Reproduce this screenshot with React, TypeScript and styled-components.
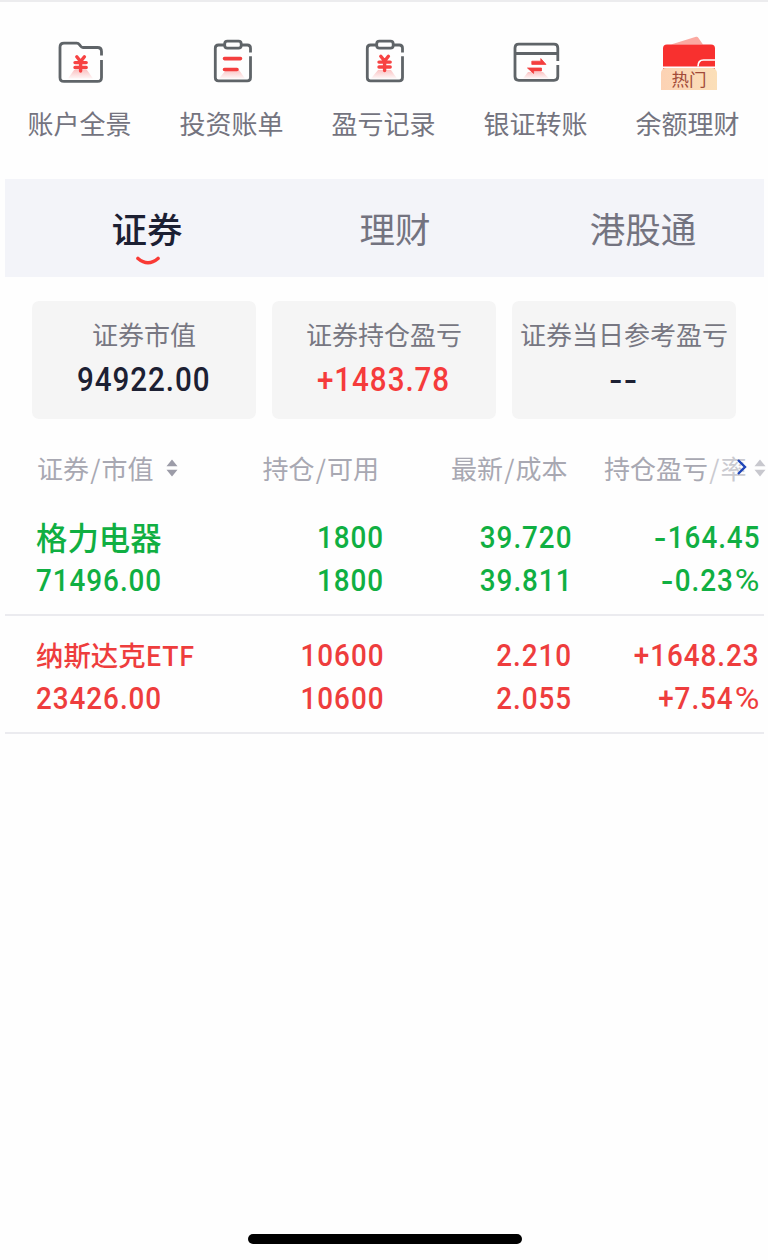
import React from "react";
import styled, { createGlobalStyle } from "styled-components";

const Global = createGlobalStyle`
  * { box-sizing: border-box; }
  body { margin: 0; background: #fefefe; font-family: "Noto Sans CJK SC", "Noto Sans", sans-serif; }
`;

const GREEN = "#10af42";
const RED = "#ee3d3d";
const INK = "#1c2033";
const STROKE = "#5f6468";

const Page = styled.main`
  display: flex;
  flex-direction: column;
  width: 768px;
  height: 1260px;
  overflow: hidden;
  background: #fefefe;
  border-top: 2px solid #ececee;
`;

const Shortcuts = styled.nav`
  display: grid;
  grid-template-columns: repeat(5, 152px);
  padding: 34px 4px 0;
  height: 177px;
`;

const Shortcut = styled.div`
  display: flex;
  flex-direction: column;
  align-items: center;
`;

const IconBox = styled.div`
  position: relative;
  width: 60px;
  height: 56px;
  svg { display: block; }
`;

const ShortcutLabel = styled.span`
  margin-top: 11px;
  padding-right: 1px;
  font-size: 26px;
  line-height: 39px;
  color: #74747f;
  white-space: nowrap;
`;

const HotBadge = styled.span`
  position: absolute;
  left: 3px;
  top: 32px;
  width: 56px;
  height: 22px;
  border-radius: 5px 5px 0 0;
  background: linear-gradient(90deg, #fcd2b4, #fbdfb8);
  color: #a14a38;
  font-size: 17.5px;
  line-height: 22px;
  text-align: center;
`;

const Tabs = styled.div`
  display: grid;
  grid-template-columns: repeat(3, 248px);
  height: 98px;
  margin: 0 4px 0 5px;
  padding-left: 18px;
  background: #f3f4f9;
`;

const Tab = styled.div<{ $active?: boolean }>`
  display: flex;
  flex-direction: column;
  align-items: center;
  padding-top: 22px;
  width: 248px;
  font-size: 35.5px;
  line-height: 53px;
  font-weight: ${(p) => (p.$active ? 500 : 400)};
  color: ${(p) => (p.$active ? INK : "#737380")};
  svg { display: block; margin: 2px 0 0 1px; }
`;

const Cards = styled.section`
  display: grid;
  grid-template-columns: repeat(3, 224px);
  gap: 16px;
  padding: 24px 32px 0;
`;

const Card = styled.div`
  display: flex;
  flex-direction: column;
  align-items: center;
  height: 118px;
  padding-top: 14px;
  border-radius: 7px;
  background: #f5f5f5;
`;

const CardLabel = styled.span`
  margin-bottom: 5px;
  font-size: 26px;
  line-height: 38px;
  color: #777782;
  white-space: nowrap;
`;

const Digits = styled.span<{ $size?: number; $origin?: string; $color?: string }>`
  display: block;
  font-family: Roboto, sans-serif;
  font-weight: 500;
  font-size: ${(p) => p.$size ?? 32}px;
  line-height: 43px;
  letter-spacing: 1.1px;
  color: ${(p) => p.$color ?? "inherit"};
  white-space: nowrap;
  transform: scaleX(0.87);
  transform-origin: ${(p) => p.$origin ?? "right"} center;
`;

const Minus = styled.span`
  display: inline-block;
  padding: 0 2px;
  transform: translateY(1px) scaleX(1.3);
`;

const Percent = styled.span`
  display: inline-block;
  margin: 0 4.2px 0 1.5px;
  font-weight: 400;
  transform: scaleX(1.21);
  transform-origin: left center;
`;

const TableHead = styled.div`
  display: grid;
  grid-template-columns: 225.5px 188.5px 153px 1fr;
  align-items: center;
  height: 38px;
  margin-top: 30px;
  padding-left: 37px;
  font-size: 26px;
  color: #a8a8b2;
`;

const HeadCell = styled.div`
  position: relative;
  display: flex;
  align-items: center;
  line-height: 38px;
  white-space: nowrap;
`;

const Slash = styled.i`
  font-style: normal;
  margin: 0 1.2px;
`;

const Faded = styled.span`
  opacity: 0.6;
`;

const SortMark = styled.svg<{ $gap: number; $faded?: boolean }>`
  margin-left: ${(p) => p.$gap}px;
  opacity: ${(p) => (p.$faded ? 0.55 : 1)};
`;

const MoreArrow = styled.svg`
  position: absolute;
  left: 131px;
  top: 9px;
`;

const Holdings = styled.section`
  padding: 11px 4px 0 5px;
`;

const Holding = styled.div<{ $color: string }>`
  display: grid;
  grid-template-columns: 167px 180px 188px 188px;
  height: 118px;
  padding: 18px 0 0 31px;
  border-bottom: 2px solid #ebebef;
  color: ${(p) => p.$color};
`;

const Pair = styled.div<{ $end?: boolean }>`
  display: flex;
  flex-direction: column;
  align-items: ${(p) => (p.$end ? "flex-end" : "flex-start")};
  padding-left: ${(p) => (p.$end ? 1 : 0)}px;
  margin-right: ${(p) => (p.$end ? -1 : 0)}px;
`;

const StockName = styled.span<{ $size: number }>`
  height: 43px;
  line-height: 41px;
  font-size: ${(p) => p.$size}px;
  font-weight: 500;
  white-space: nowrap;
`;

const HomeBar = styled.div`
  width: 274px;
  height: 10px;
  margin: auto 0 16px 248px;
  border-radius: 5px;
  background: #000;
`;

const Glow = ({ id, d }: { id: string; d: string }) => (
  <>
    <defs>
      <linearGradient id={id} x1="0" y1="0" x2="0" y2="1">
        <stop offset="0" stopColor="#f43c3c" stopOpacity="0.3" />
        <stop offset="1" stopColor="#f43c3c" stopOpacity="0.04" />
      </linearGradient>
    </defs>
    <path d={d} fill={`url(#${id})`} stroke="none" />
  </>
);

const Yen = ({ y }: { y: number }) => (
  <g transform={`translate(0 ${y})`} stroke="#f74343" strokeWidth="3.4" strokeLinecap="round" fill="none">
    <path d="M26.800 1.800 30.6 6.5 34.4 1.800M30.6 7V16M25 7.6H36.2M25 12.5H36.2" />
  </g>
);

const FolderIcon = () => (
  <svg width="60" height="56" fill="none" stroke={STROKE} strokeWidth="2.8">
    <Glow id="g1" d="M24 34H37L43 42.5H18Z" />
    <path d="M51.5 19.5V15.5Q51.5 11.5 47.5 11.5H33Q31.5 11.5 30.5 10L29.5 8.7Q28.5 7.2 26.7 7.2H14Q10 7.2 10 11.2V41.4Q10 45.4 14 45.4H47.5Q51.5 45.4 51.5 41.4V24" />
    <Yen y={19} />
  </svg>
);

const Clipboard = ({ id, children }: { id: string; children: React.ReactNode }) => (
  <svg width="60" height="56" fill="none" stroke={STROKE} strokeWidth="2.8">
    <Glow id={id} d="M24 34H37L43 42.5H17Z" />
    <path d="M22 9H16.5Q13.3 9 13.3 12.2V41.5Q13.3 44.8 16.5 44.8H45.3Q48.5 44.8 48.5 41.5V20.3M48.5 16.5V12.2Q48.5 9 45.3 9H40" />
    <rect x="22.7" y="5.2" width="16.5" height="7" rx="2.7" />
    {children}
  </svg>
);

const CardIcon = () => (
  <svg width="60" height="56" fill="none" stroke={STROKE} strokeWidth="2.8">
    <Glow id="g4" d="M22 36H37L43 42.5H17Z" />
    <path d="M51.8 25V12Q51.8 8.2 48 8.2H12.8Q9 8.2 9 12V40.6Q9 44.4 12.8 44.4H48Q51.8 44.4 51.8 40.6V29M9 17.5H51.8" />
    <g fill="#f43f3f" stroke="#f43f3f" strokeWidth="0.8" strokeLinejoin="round">
      <path d="M25.8 25.2H34.8V22.6L40 28.4H25.8Z" />
      <path d="M35.5 35H27.600V37.4L21.5 32H35.5Z" />
    </g>
  </svg>
);

const WalletIcon = () => (
  <svg width="60" height="56">
    <path d="M13 8.5 38 .8Q39.5.4 40.3 1.7L45 8.5Z" fill="#fba9a1" />
    <path d="M5 34V12.5Q5 8.5 9 8.5H53Q57 8.5 57 12.5V34Z" fill="#f8302f" />
    <path d="M57.5 24H45.5Q40 24 40 30.5" fill="none" stroke="#fff" strokeWidth="1.7" />
    <path d="M4 31.4H58" stroke="#fff" strokeWidth="1.6" />
  </svg>
);

const Sort = ({ gap, faded }: { gap: number; faded?: boolean }) => (
  <SortMark $gap={gap} $faded={faded} width="12" height="18" fill="#9c9ca8">
    <path d="M6 .5 11.5 7.3H.5ZM6 17.5.5 10.7H11.5Z" />
  </SortMark>
);

const Figure = ({ text, ...rest }: { text: string; $size?: number; $origin?: string; $color?: string }) => (
  <Digits {...rest}>
    {text.split(/([-%])/).filter(Boolean).map((part, i) =>
      part === "-" ? <Minus key={i}>-</Minus> : part === "%" ? <Percent key={i}>%</Percent> : part
    )}
  </Digits>
);

const shortcuts = [
  { label: "账户全景", icon: <FolderIcon /> },
  {
    label: "投资账单",
    icon: (
      <Clipboard id="g2">
        <path d="M22.5 22.6H38.5M22.5 33.5H35" stroke="#f43f3f" strokeWidth="3.6" strokeLinecap="round" />
      </Clipboard>
    ),
  },
  { label: "盈亏记录", icon: <Clipboard id="g3"><Yen y={18.5} /></Clipboard> },
  { label: "银证转账", icon: <CardIcon /> },
  { label: "余额理财", icon: <WalletIcon />, badge: "热门" },
];

const cards = [
  { label: "证券市值", value: "94922.00", color: INK },
  { label: "证券持仓盈亏", value: "+1483.78", color: "#f53b3b" },
  { label: "证券当日参考盈亏", value: "--", color: INK },
];

const holdings = [
  { color: GREEN, name: "格力电器", size: 31.4, value: "71496.00", cols: [["1800", "1800"], ["39.720", "39.811"], ["-164.45", "-0.23%"]] },
  { color: RED, name: "纳斯达克ETF", size: 27.4, value: "23426.00", cols: [["10600", "10600"], ["2.210", "2.055"], ["+1648.23", "+7.54%"]] },
];

export default function App() {
  return (
    <Page>
      <Global />
      <Shortcuts>
        {shortcuts.map((s) => (
          <Shortcut key={s.label}>
            <IconBox>
              {s.icon}
              {s.badge && <HotBadge>{s.badge}</HotBadge>}
            </IconBox>
            <ShortcutLabel>{s.label}</ShortcutLabel>
          </Shortcut>
        ))}
      </Shortcuts>
      <Tabs>
        <Tab $active>
          证券
          <svg width="26" height="12" fill="none" stroke="#f93a35" strokeWidth="3.6" strokeLinecap="round">
            <path d="M3 2.5Q13 11 23 2.5" />
          </svg>
        </Tab>
        <Tab>理财</Tab>
        <Tab>港股通</Tab>
      </Tabs>
      <Cards>
        {cards.map((c) => (
          <Card key={c.label}>
            <CardLabel>{c.label}</CardLabel>
            <Figure text={c.value} $size={34} $origin="center" $color={c.color} />
          </Card>
        ))}
      </Cards>
      <TableHead>
        <HeadCell>证券<Slash>/</Slash>市值<Sort gap={12} /></HeadCell>
        <HeadCell>持仓<Slash>/</Slash>可用</HeadCell>
        <HeadCell>最新<Slash>/</Slash>成本</HeadCell>
        <HeadCell>
          持仓盈亏<Faded><Slash>/</Slash>率</Faded>
          <Sort gap={7} faded />
          <MoreArrow width="16" height="18" fill="none" stroke="#1f45b8" strokeWidth="2.4">
            <path d="M3 2 10 9 3 16" />
          </MoreArrow>
        </HeadCell>
      </TableHead>
      <Holdings>
        {holdings.map((h) => (
          <Holding key={h.name} $color={h.color}>
            <Pair>
              <StockName $size={h.size}>{h.name}</StockName>
              <Figure text={h.value} $origin="left" />
            </Pair>
            {h.cols.map(([a, b], i) => (
              <Pair $end key={i}>
                <Figure text={a} />
                <Figure text={b} />
              </Pair>
            ))}
          </Holding>
        ))}
      </Holdings>
      <HomeBar />
    </Page>
  );
}
